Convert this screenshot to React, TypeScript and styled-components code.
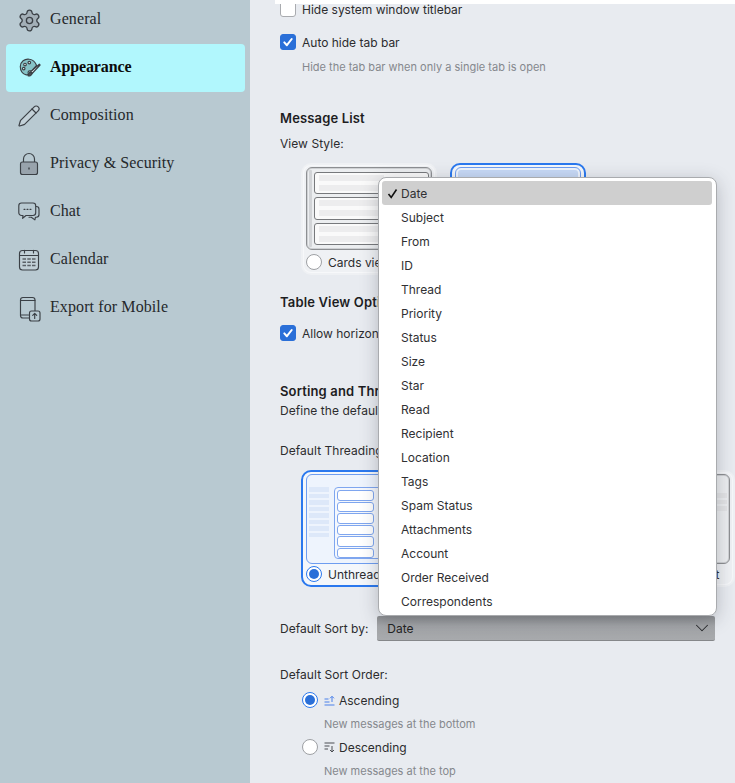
import React from "react";
import styled, { createGlobalStyle } from "styled-components";
import { Settings, Pencil, ChevronDown } from "lucide-react";

const Global = createGlobalStyle`
  html, body { margin: 0; padding: 0; background: #e8ebf0; }
  * { box-sizing: border-box; }
`;

const Page = styled.div`
  display: flex;
  width: 735px;
  height: 783px;
  overflow: hidden;
  font-family: Inter, "Liberation Sans", sans-serif;
  font-size: 12px;
  color: #2c2c2e;
`;

const Sidebar = styled.nav`
  flex: 0 0 250px;
  background: #b8c9d1;
  padding: 0 5px 0 6px;
  display: flex;
  flex-direction: column;
  font-family: "Liberation Serif", serif;
`;

const NavItem = styled.div<{ $active?: boolean }>`
  height: 48px;
  flex: none;
  display: flex;
  align-items: center;
  gap: 9px;
  padding-left: 11px;
  border-radius: 4px;
  font-size: 16px;
  letter-spacing: ${(p) => (p.$active ? "-0.12px" : "0.1px")};
  color: ${(p) => (p.$active ? "#0c0c0c" : "#25282b")};
  font-weight: ${(p) => (p.$active ? 700 : 400)};
  background: ${(p) => (p.$active ? "#b1f7fd" : "transparent")};
  &:first-child { margin-top: -4px; }
`;

const NavLabel = styled.span`
  margin-top: -2px;
`;

const NavGlyph = styled.svg`
  width: 24px;
  height: 24px;
  flex: none;
  overflow: visible;
  fill: none;
  stroke: #3b4046;
  stroke-width: 1.15;
  stroke-linecap: round;
  stroke-linejoin: round;
`;

const Main = styled.main`
  position: relative;
  flex: 1;
  height: 783px;
  overflow: hidden;
  padding-left: 30px;
  display: flex;
  flex-direction: column;
  background: #e8ebf0;
`;

const TopStrip = styled.div`
  position: absolute;
  top: 0;
  left: 25px;
  right: 0;
  height: 4px;
  background: #fff;
`;

const CheckRow = styled.label<{ $mt: number }>`
  flex: none;
  display: flex;
  align-items: center;
  gap: 6px;
  height: 18px;
  margin-top: ${(p) => p.$mt}px;
`;

const CheckBox = styled.span<{ $on?: boolean }>`
  width: 16px;
  height: 16px;
  flex: none;
  border-radius: 3px;
  display: flex;
  align-items: center;
  justify-content: center;
  background: ${(p) => (p.$on ? "#2a6fd8" : "#fff")};
  border: 1px solid ${(p) => (p.$on ? "#2a6fd8" : "#a9abaf")};
`;

const Hint = styled.div<{ $mt: number; $left: number }>`
  flex: none;
  height: 16px;
  line-height: 16px;
  margin-top: ${(p) => p.$mt}px;
  padding-left: ${(p) => p.$left}px;
  font-size: 11px;
  color: #85888d;
`;

const Heading = styled.h3<{ $mt: number }>`
  flex: none;
  margin: ${(p) => p.$mt}px 0 0;
  height: 18px;
  line-height: 18px;
  font-size: 13px;
  font-weight: 600;
  letter-spacing: 0.15px;
  color: #1d1d1f;
`;

const Label = styled.div<{ $mt: number }>`
  flex: none;
  height: 16px;
  line-height: 16px;
  margin-top: ${(p) => p.$mt}px;
  letter-spacing: 0.05px;
  white-space: nowrap;
`;

const CardRow = styled.div<{ $mt: number }>`
  flex: none;
  display: flex;
  gap: 13px;
  margin-top: ${(p) => p.$mt}px;
  padding-left: 21px;
`;

const Card = styled.div<{ $on?: boolean; $h: number }>`
  flex: none;
  width: 136px;
  height: ${(p) => p.$h}px;
  display: flex;
  flex-direction: column;
  padding: 2px 3px 0;
  border-radius: 10px;
  border: 2px solid ${(p) => (p.$on ? "#2a78ee" : "transparent")};
  background: ${(p) => (p.$on ? "#f4f7fb" : "#eff1f4")};
  box-shadow: ${(p) => (p.$on ? "none" : "inset 0 0 0 1px #f7f8fa")};
`;

const Frame = styled.div<{ $on?: boolean; $h: number }>`
  flex: none;
  height: ${(p) => p.$h}px;
  display: flex;
  gap: 2px;
  padding: 2px;
  border-radius: 6px;
  border: 1px solid ${(p) => (p.$on ? "#6e9df0" : "#8d8f92")};
  background: ${(p) => (p.$on ? "#eef4fd" : "#eceef0")};
  box-shadow: ${(p) => (p.$on ? "none" : "inset 0 0 0 1px #cfd1d4")};
  overflow: hidden;
`;

const Rail = styled.div`
  flex: 0 0 3px;
  border-radius: 1px;
  background: #d2d4d7;
`;

const CardStack = styled.div`
  flex: 1;
  display: flex;
  flex-direction: column;
  gap: 3px;
  padding: 2px 0;
`;

const MiniCard = styled.div`
  flex: 1;
  display: flex;
  flex-direction: column;
  justify-content: center;
  gap: 4px;
  padding: 0 4px;
  border-radius: 3px;
  border: 1px solid #77797c;
  background: #fafafa;
`;

const MiniLine = styled.div<{ $w: string }>`
  height: 6px;
  width: ${(p) => p.$w};
  background: #ededee;
`;

const Stripes = styled.div<{ $w?: number; $pt: number }>`
  flex: ${(p) => (p.$w ? `0 0 ${p.$w}px` : "1")};
  display: flex;
  flex-direction: column;
  gap: 2px;
  padding-top: ${(p) => p.$pt}px;
`;

const Stripe = styled.div<{ $blue?: boolean; $w?: string }>`
  height: 4.5px;
  flex: none;
  width: ${(p) => p.$w ?? "100%"};
  background: ${(p) => (p.$blue ? "#dde8f9" : "#e3e4e6")};
`;

const TableHead = styled.div`
  flex: 0 0 12px;
  border-radius: 3px 3px 0 0;
  background: #c7d9f6;
`;

const ThreadPane = styled.div`
  flex: 1;
  margin: 10px 0 0 3px;
  padding: 2px;
  display: flex;
  flex-direction: column;
  gap: 1px;
  height: 72px;
  border-radius: 4px;
  border: 1px solid #7fa6ef;
  background: #f5f8fd;
`;

const ThreadRow = styled.div`
  flex: 0 0 10.5px;
  width: 37px;
  border-radius: 3px;
  border: 1px solid #7fa6ef;
  background: #fff;
`;

const RadioRow = styled.div<{ $mt?: number; $left?: number }>`
  flex: none;
  display: flex;
  align-items: center;
  gap: 6px;
  height: 18px;
  margin-top: ${(p) => p.$mt ?? 3}px;
  padding-left: ${(p) => p.$left ?? 0}px;
  white-space: nowrap;
`;

const Radio = styled.span<{ $on?: boolean }>`
  flex: none;
  width: 16px;
  height: 16px;
  border-radius: 50%;
  display: flex;
  align-items: center;
  justify-content: center;
  background: #fff;
  border: 1px solid ${(p) => (p.$on ? "#2a78ee" : "#9ea0a4")};
  &::after {
    content: "";
    width: 10px;
    height: 10px;
    border-radius: 50%;
    background: ${(p) => (p.$on ? "#2a6fd8" : "transparent")};
  }
`;

const SortRow = styled.div`
  flex: none;
  display: flex;
  align-items: center;
  gap: 9px;
  height: 25px;
  margin-top: 29px;
`;

const SelectBox = styled.div`
  flex: none;
  width: 338px;
  height: 25px;
  display: flex;
  align-items: center;
  justify-content: space-between;
  padding: 0 2px 0 10px;
  border-radius: 2px;
  color: #232323;
  background: linear-gradient(#8d8f92, #a4a6a9 10px, #a8aaad);
  border-bottom: 1px solid #85878a;
`;

const SortGlyph = styled.svg<{ $c: string }>`
  flex: none;
  width: 11px;
  height: 11px;
  margin-right: -2px;
  fill: none;
  stroke: ${(p) => p.$c};
  stroke-width: 1;
`;

const Menu = styled.ul`
  position: absolute;
  left: 128px;
  top: 177px;
  width: 339px;
  height: 439px;
  margin: 0;
  padding: 3px 4px 3px 3px;
  list-style: none;
  background: #fff;
  border: 1px solid #a9abae;
  border-radius: 8px;
  box-shadow: 0 4px 18px rgba(50, 55, 65, 0.28);
`;

const MenuItem = styled.li<{ $on?: boolean }>`
  height: 24px;
  display: flex;
  align-items: center;
  border-radius: 3px;
  color: #303033;
  background: ${(p) => (p.$on ? "#cfcfcf" : "transparent")};
`;

const MenuCheck = styled.span`
  flex: 0 0 19px;
  display: flex;
  justify-content: center;
  padding-left: 1px;
`;

const menuItems = [
  "Date", "Subject", "From", "ID", "Thread", "Priority", "Status", "Size", "Star",
  "Read", "Recipient", "Location", "Tags", "Spam Status", "Attachments", "Account",
  "Order Received", "Correspondents",
];

const CheckMark = () => (
  <svg width="12" height="12" viewBox="0 0 12 12" fill="none" stroke="#fff" strokeWidth="2" strokeLinecap="round" strokeLinejoin="round">
    <path d="M2.3 6.4l2.6 2.8 4.8-6.2" />
  </svg>
);

const GearIcon = () => (
  <Settings size={25} strokeWidth={1.25} color="#3b4046" fill="#a3afb7" style={{ margin: "0 -1px 0 0" }} />
);

const PaletteIcon = () => (
  <NavGlyph viewBox="0 0 24 24">
    <path fill="#86c3c7" d="M12.500 3.200C7.600 2.400 3.400 5.800 3.300 10.600c-.1 3.800 2.200 7.800 5.900 8.300 1.700.2 2.400-.8 2-1.900-.4-1.200.3-2.200 1.400-2.200h2l5-5.300c-1.200-3.100-3.900-5.900-7.100-6.300z" />
    <circle cx="8" cy="8.500" r="1.300" fill="#eef8f9" />
    <circle cx="12.300" cy="6.600" r="1.300" fill="#eef8f9" />
    <circle cx="6.700" cy="12.600" r="1.300" fill="#eef8f9" />
    <path fill="#eef8f9" d="M22.300 8.200l-8.700 7.700 1.500 1.600 8-8.500z" />
    <path fill="#4a5056" d="M13.500 16c-1.300.2-1.700 1-1.800 1.900-.1.800-.4 1.300-.8 1.700 1.600.7 3.400.1 4.200-1.800z" />
  </NavGlyph>
);

const PencilIcon = () => (
  <Pencil size={24} strokeWidth={1.2} color="#3b4046" fill="#c3d1d8" />
);

const LockIcon = () => (
  <NavGlyph viewBox="0 0 24 24">
    <path d="M6.500 10V7a5.500 5.500 0 0 1 11 0v3" />
    <rect x="3.500" y="10" width="17" height="12.500" rx="2" fill="#98a3ac" />
    <rect x="11.300" y="15.500" width="1.400" height="2" fill="#3b4046" stroke="none" />
  </NavGlyph>
);

const ChatIcon = () => (
  <NavGlyph viewBox="0 0 24 24">
    <path d="M18.500 6.500h.8c1.500 0 2.700 1.200 2.700 2.700v5.300c0 1.500-1.200 2.700-2.700 2.700h-.8l-.6 2.700-3.600-2.700H12" />
    <path fill="#b8c9d1" d="M4.500 3h11.500c1.500 0 2.700 1.200 2.700 2.700v7.100c0 1.500-1.200 2.700-2.700 2.700H9l-3.400 2.800.4-2.800H4.500c-1.500 0-2.700-1.200-2.700-2.700V5.700C1.800 4.200 3 3 4.500 3z" />
    <path d="M7 9.300h1M10 9.300h1M13 9.300h1" />
  </NavGlyph>
);

const CalendarIcon = () => (
  <NavGlyph viewBox="0 0 24 24">
    <rect x="2.500" y="2.500" width="19" height="19.500" rx="3" fill="#c1cfd6" />
    <path d="M2.500 7.500h19" />
    <path d="M7.500 2.200v2.800M16.500 2.200v2.800" />
    <path strokeWidth="1.500" stroke="#5b6167" strokeLinecap="butt" d="M5.500 11h3.500M10.300 11h3.500M15 11h3.500M5.500 14.300h3.500M10.300 14.300h3.500M15 14.300h3.500M5.500 17.600h3.500M10.300 17.600h3.500M15 17.600h3.500" />
  </NavGlyph>
);

const ExportIcon = () => (
  <NavGlyph viewBox="0 0 24 24">
    <rect x="3.500" y="1.500" width="14.500" height="20.500" rx="2.500" />
    <path d="M3.500 4.500h14.500M3.500 19h8" />
    <rect x="12.500" y="15" width="10.500" height="10" rx="2" fill="#b8c9d1" />
    <path d="M17.700 22.500v-5M15.700 19.300l2-2 2 2" />
  </NavGlyph>
);

const navItems = [
  { label: "General", Icon: GearIcon },
  { label: "Appearance", Icon: PaletteIcon, active: true },
  { label: "Composition", Icon: PencilIcon },
  { label: "Privacy & Security", Icon: LockIcon },
  { label: "Chat", Icon: ChatIcon },
  { label: "Calendar", Icon: CalendarIcon },
  { label: "Export for Mobile", Icon: ExportIcon },
];

const CardsPreview = () => (
  <Frame $h={83}>
    <Rail />
    <CardStack>
      {[0, 1, 2].map((i) => (
        <MiniCard key={i}>
          <MiniLine $w="62%" />
          <MiniLine $w="86%" />
        </MiniCard>
      ))}
    </CardStack>
  </Frame>
);

const TablePreview = () => (
  <Frame $on $h={83}>
    <Stripes $pt={0}>
      <TableHead />
      {[0, 1, 2, 3, 4, 5].map((i) => (
        <Stripe key={i} $blue />
      ))}
    </Stripes>
  </Frame>
);

const UnthreadedPreview = () => (
  <Frame $on $h={90}>
    <Stripes $w={20} $pt={10}>
      {[0, 1, 2, 3, 4, 5, 6, 7].map((i) => (
        <Stripe key={i} $blue />
      ))}
    </Stripes>
    <ThreadPane>
      {[0, 1, 2, 3, 4, 5].map((i) => (
        <ThreadRow key={i} />
      ))}
    </ThreadPane>
  </Frame>
);

const GroupedPreview = () => (
  <Frame $h={90}>
    <Stripes $pt={16}>
      {["100%", "100%", "100%", "88%", "0", "0", "88%"].map((w, i) => (
        <Stripe key={i} $w={w} />
      ))}
    </Stripes>
  </Frame>
);

const AscIcon = () => (
  <SortGlyph $c="#4a80ea" viewBox="0 0 11 11">
    <path d="M0.500 4h4M0.500 7h5M0.500 10h10M8 7V1.500M6 3.300L8 1.300l2 2" />
  </SortGlyph>
);

const DescIcon = () => (
  <SortGlyph $c="#4b4d52" viewBox="0 0 11 11">
    <path d="M0.500 1h10M0.500 4h5M0.500 7h3.500M8 4v6M6 8l2 2 2-2" />
  </SortGlyph>
);

export default function App() {
  return (
    <Page>
      <Global />
      <Sidebar>
        {navItems.map(({ label, Icon, active }) => (
          <NavItem key={label} $active={active}>
            <Icon />
            <NavLabel>{label}</NavLabel>
          </NavItem>
        ))}
      </Sidebar>
      <Main>
        <TopStrip />
        <CheckRow $mt={0}>
          <CheckBox />
          Hide system window titlebar
        </CheckRow>
        <CheckRow $mt={15}>
          <CheckBox $on><CheckMark /></CheckBox>
          Auto hide tab bar
        </CheckRow>
        <Hint $mt={8} $left={22}>Hide the tab bar when only a single tab is open</Hint>

        <Heading $mt={34}>Message List</Heading>
        <Label $mt={9}>View Style:</Label>
        <CardRow $mt={11}>
          <Card $h={112}>
            <CardsPreview />
            <RadioRow><Radio />Cards view</RadioRow>
          </Card>
          <Card $on $h={112}>
            <TablePreview />
            <RadioRow><Radio $on />Table view</RadioRow>
          </Card>
        </CardRow>

        <Heading $mt={18}>Table View Options</Heading>
        <CheckRow $mt={13}>
          <CheckBox $on><CheckMark /></CheckBox>
          Allow horizontal scrolling
        </CheckRow>

        <Heading $mt={40}>Sorting and Threading</Heading>
        <Label $mt={3}>Define the default sorting and threading of messages.</Label>
        <Label $mt={24}>Default Threading:</Label>
        <CardRow $mt={11}>
          <Card $on $h={117}>
            <UnthreadedPreview />
            <RadioRow $mt={1}><Radio $on />Unthreaded</RadioRow>
          </Card>
          <Card $h={117}>
            <GroupedPreview />
            <RadioRow $mt={1}><Radio />Threaded</RadioRow>
          </Card>
          <Card $h={117}>
            <GroupedPreview />
            <RadioRow $mt={1}><Radio />Grouped by Sort</RadioRow>
          </Card>
        </CardRow>

        <SortRow>
          Default Sort by:
          <SelectBox>
            Date
            <ChevronDown size={22} strokeWidth={1.1} color="#26282b" />
          </SelectBox>
        </SortRow>

        <Label $mt={26}>Default Sort Order:</Label>
        <RadioRow $mt={8} $left={22}>
          <Radio $on /><AscIcon />Ascending
        </RadioRow>
        <Hint $mt={7} $left={44}>New messages at the bottom</Hint>
        <RadioRow $mt={6} $left={22}>
          <Radio /><DescIcon />Descending
        </RadioRow>
        <Hint $mt={7} $left={44}>New messages at the top</Hint>

        <Menu>
          {menuItems.map((item, i) => (
            <MenuItem key={item} $on={i === 0}>
              <MenuCheck>
                {i === 0 && (
                  <svg width="11" height="11" viewBox="0 0 11 11" fill="none" stroke="#111" strokeWidth="1.6">
                    <path d="M1.500 6l2.700 3.500L9.500 1.500" />
                  </svg>
                )}
              </MenuCheck>
              {item}
            </MenuItem>
          ))}
        </Menu>
      </Main>
    </Page>
  );
}
